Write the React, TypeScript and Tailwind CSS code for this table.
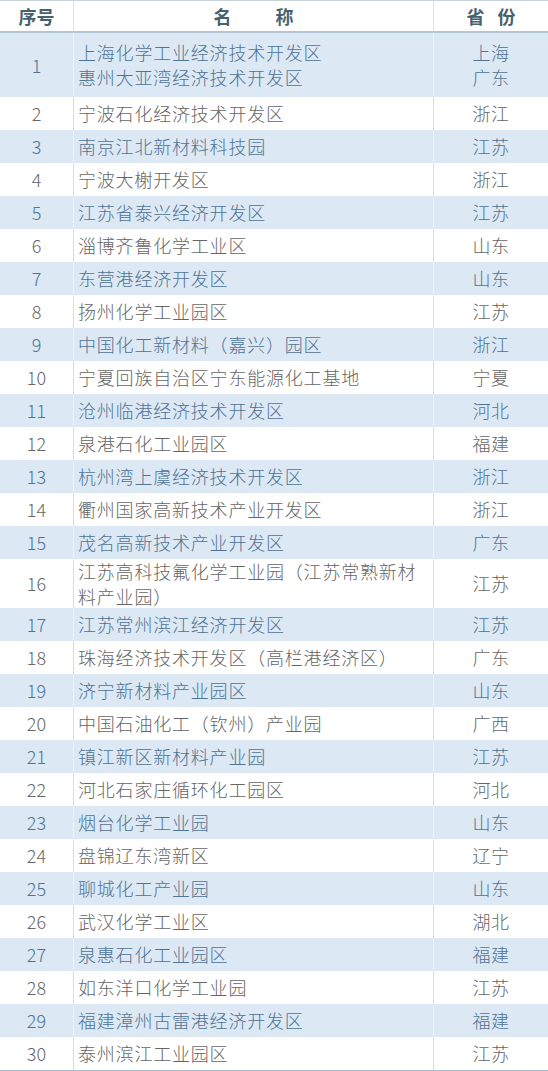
import React from "react";

type Row = { n: number; names: string[]; provs: string[]; h: string };

const data: [string[], string[]][] = [
  [["上海化学工业经济技术开发区", "惠州大亚湾经济技术开发区"], ["上海", "广东"]],
  [["宁波石化经济技术开发区"], ["浙江"]],
  [["南京江北新材料科技园"], ["江苏"]],
  [["宁波大榭开发区"], ["浙江"]],
  [["江苏省泰兴经济开发区"], ["江苏"]],
  [["淄博齐鲁化学工业区"], ["山东"]],
  [["东营港经济开发区"], ["山东"]],
  [["扬州化学工业园区"], ["江苏"]],
  [["中国化工新材料（嘉兴）园区"], ["浙江"]],
  [["宁夏回族自治区宁东能源化工基地"], ["宁夏"]],
  [["沧州临港经济技术开发区"], ["河北"]],
  [["泉港石化工业园区"], ["福建"]],
  [["杭州湾上虞经济技术开发区"], ["浙江"]],
  [["衢州国家高新技术产业开发区"], ["浙江"]],
  [["茂名高新技术产业开发区"], ["广东"]],
  [["江苏高科技氟化学工业园（江苏常熟新材", "料产业园）"], ["江苏"]],
  [["江苏常州滨江经济开发区"], ["江苏"]],
  [["珠海经济技术开发区（高栏港经济区）"], ["广东"]],
  [["济宁新材料产业园区"], ["山东"]],
  [["中国石油化工（钦州）产业园"], ["广西"]],
  [["镇江新区新材料产业园"], ["江苏"]],
  [["河北石家庄循环化工园区"], ["河北"]],
  [["烟台化学工业园"], ["山东"]],
  [["盘锦辽东湾新区"], ["辽宁"]],
  [["聊城化工产业园"], ["山东"]],
  [["武汉化学工业区"], ["湖北"]],
  [["泉惠石化工业园区"], ["福建"]],
  [["如东洋口化学工业园"], ["江苏"]],
  [["福建漳州古雷港经济开发区"], ["福建"]],
  [["泰州滨江工业园区"], ["江苏"]],
];

const rows: Row[] = data.map(([names, provs], i) => ({
  n: i + 1,
  names,
  provs,
  h: i === 0 ? "h-[64px]" : i === 15 ? "h-[49px]" : "h-[33px]",
}));

const font = {
  fontFamily: '"Noto Sans CJK SC", "Noto Sans", sans-serif',
};

export default function App() {
  return (
    <div className="w-[548px] bg-white" style={font}>
      <div className="border-t border-[#c9d3da]">
        {/* header */}
        <div className="flex h-[32px] border-b-2 border-[#b4c6d3] font-bold text-[18px] text-[#47626f]">
          <div className="w-[74px] flex items-center justify-center border-r border-[#dde3e8]">序号</div>
          <div className="w-[360px] flex items-center justify-center gap-[44px] border-r border-[#dde3e8]">
            <span>名</span>
            <span>称</span>
          </div>
          <div className="flex-1 flex items-center justify-center gap-[13px]">
            <span>省</span>
            <span>份</span>
          </div>
        </div>
        {rows.map((r) => {
          const blue = r.n % 2 === 1;
          return (
            <div
              key={r.n}
              className={
                "flex text-[18px] leading-[25px] font-light " +
                r.h +
                " " +
                (blue ? "bg-[#dce8f4] text-[#4f7494]" : "bg-white text-[#666666]")
              }
            >
              <div
                className={
                  "w-[74px] flex items-center justify-center border-r " +
                  (blue ? "border-[#eef3f8]" : "border-[#d7dde3]")
                }
              >
                {r.n}
              </div>
              <div
                className={
                  "w-[360px] flex flex-col justify-center pl-[4px] tracking-[0.8px] border-r " +
                  (blue ? "border-[#eef3f8]" : "border-[#d7dde3]")
                }
              >
                {r.names.map((t, k) => (
                  <div key={k} className="whitespace-nowrap">
                    {t}
                  </div>
                ))}
              </div>
              <div className="flex-1 flex flex-col items-center justify-center tracking-[0.6px]">
                {r.provs.map((t, k) => (
                  <div key={k}>{t}</div>
                ))}
              </div>
            </div>
          );
        })}
        <div className="h-[2px] bg-[#a9bfcd]" />
      </div>
    </div>
  );
}
